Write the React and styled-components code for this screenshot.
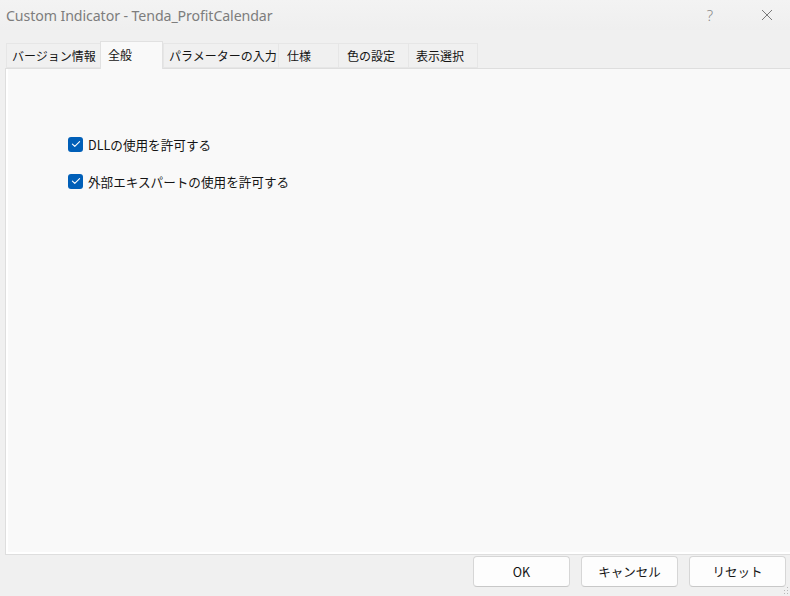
import React from "react";
import styled, { createGlobalStyle } from "styled-components";

const GlobalStyle = createGlobalStyle`
  html, body {
    margin: 0;
    padding: 0;
    background: #f0f0f0;
  }
  * {
    box-sizing: border-box;
  }
`;

const uiFont = `"Noto Sans", "Noto Sans CJK JP", sans-serif`;
const jpFont = `"Noto Sans CJK JP", "Noto Sans", sans-serif`;

const Window = styled.div`
  width: 790px;
  height: 596px;
  display: flex;
  flex-direction: column;
  background: #f0f0f0;
  font-family: ${jpFont};
  overflow: hidden;
  position: relative;
`;

const TitleBar = styled.div`
  height: 30px;
  display: flex;
  align-items: center;
  justify-content: space-between;
  padding-left: 6px;
  background: linear-gradient(#f3f3f3, #efefef);
`;

const Title = styled.div`
  font-family: ${uiFont};
  font-size: 14.2px;
  color: #7d7d7d;
  letter-spacing: -0.1px;
`;

const TitleButtons = styled.div`
  display: flex;
  align-items: center;
  height: 100%;
`;

const TitleButton = styled.div`
  width: ${(p) => p.$w}px;
  height: 100%;
  display: flex;
  align-items: center;
  justify-content: center;
  color: #8a8a8a;
  font-family: ${uiFont};
  font-size: 15px;
  font-weight: 300;
`;

const Body = styled.div`
  flex: 1;
  display: flex;
  flex-direction: column;
  padding: 11px 0 0 5px;
`;

const TabStrip = styled.div`
  display: flex;
  align-items: flex-end;
  padding-left: 1px;
  height: 27px;
  position: relative;
  z-index: 1;
`;

const Tab = styled.div`
  width: ${(p) => p.$w}px;
  height: ${(p) => (p.$active ? 28 : 25)}px;
  margin-bottom: ${(p) => (p.$active ? -1 : 0)}px;
  padding-left: ${(p) => p.$pad}px;
  display: flex;
  align-items: center;
  font-size: 12px;
  color: #141414;
  white-space: nowrap;
  background: ${(p) => (p.$active ? "#f9f9f9" : "#f0f0f0")};
  border: 1px solid ${(p) => (p.$active ? "#e1e1e1" : "#e6e6e6")};
  border-bottom: ${(p) => (p.$active ? "none" : "1px solid #e6e6e6")};
  border-right: ${(p) => (p.$active ? "1px solid #e1e1e1" : "none")};
  padding-bottom: ${(p) => (p.$active ? 3 : 0)}px;
  ${(p) => p.$last && "border-right: 1px solid #e6e6e6;"}
`;

const Panel = styled.div`
  flex: 1;
  background: #f9f9f9;
  border: 1px solid #dedede;
  border-right: none;
  box-shadow: inset 2px 0 0 #ffffff, inset 0 -2px 0 #ffffff;
  padding: 67px 0 0 62px;
  display: flex;
  flex-direction: column;
  gap: 21px;
`;

const CheckRow = styled.label`
  display: flex;
  align-items: center;
  gap: 5px;
  font-size: 12.6px;
  color: #141414;
  height: 16px;
`;

const Box = styled.span`
  width: 15px;
  height: 15px;
  border-radius: 3px;
  background: #005fb8;
  display: flex;
  align-items: center;
  justify-content: center;
  flex-shrink: 0;
`;

const Footer = styled.div`
  height: 41px;
  display: flex;
  justify-content: flex-end;
  gap: 11px;
  padding: 1px 4px 0 0;
`;

const Button = styled.button`
  width: 97px;
  height: 31px;
  background: #fdfdfd;
  border: 1px solid #d6d6d6;
  border-bottom-color: #c8c8c8;
  border-radius: 4px;
  font-family: ${jpFont};
  font-size: 12.5px;
  color: #141414;
  padding: 0;
`;

const Grip = styled.svg`
  position: absolute;
  right: 1px;
  bottom: 1px;
`;

const tabs = [
  { label: "バージョン情報", w: 94, pad: 5 },
  { label: "全般", w: 63, pad: 7, active: true },
  { label: "パラメーターの入力", w: 115, pad: 5 },
  { label: "仕様", w: 60, pad: 8 },
  { label: "色の設定", w: 70, pad: 8 },
  { label: "表示選択", w: 70, pad: 7 },
];

const options = ["DLLの使用を許可する", "外部エキスパートの使用を許可する"];

const Check = () => (
  <Box>
    <svg width="10" height="8" viewBox="0 0 10 8">
      <path
        d="M1.4 4.2 L3.8 6.4 L8.6 1.6"
        fill="none"
        stroke="#fff"
        strokeWidth="1.1"
        strokeLinecap="round"
        strokeLinejoin="round"
      />
    </svg>
  </Box>
);

export default function App() {
  return (
    <>
      <GlobalStyle />
      <Window>
        <TitleBar>
          <Title>Custom Indicator - Tenda_ProfitCalendar</Title>
          <TitleButtons>
            <TitleButton $w={68}>?</TitleButton>
            <TitleButton $w={46}>
              <svg width="12" height="12" viewBox="0 0 12 12">
                <path
                  d="M1 1 L11 11 M11 1 L1 11"
                  stroke="#7a7a7a"
                  strokeWidth="1"
                  fill="none"
                />
              </svg>
            </TitleButton>
          </TitleButtons>
        </TitleBar>
        <Body>
          <TabStrip>
            {tabs.map((t, i) => (
              <Tab
                key={t.label}
                $w={t.w}
                $pad={t.pad}
                $active={t.active}
                $last={i === tabs.length - 1}
              >
                {t.label}
              </Tab>
            ))}
          </TabStrip>
          <Panel>
            {options.map((o) => (
              <CheckRow key={o}>
                <Check />
                {o}
              </CheckRow>
            ))}
          </Panel>
          <Footer>
            <Button>OK</Button>
            <Button>キャンセル</Button>
            <Button>リセット</Button>
          </Footer>
        </Body>
        <Grip width="6" height="8" viewBox="0 0 6 8">
          <rect x="4" y="0" width="1" height="1" fill="#b8b8b8" />
          <rect x="4" y="3" width="1" height="1" fill="#b8b8b8" />
          <rect x="1" y="3" width="1" height="1" fill="#b8b8b8" />
          <rect x="4" y="6" width="1" height="1" fill="#b8b8b8" />
          <rect x="1" y="6" width="1" height="1" fill="#b8b8b8" />
        </Grip>
      </Window>
    </>
  );
}
